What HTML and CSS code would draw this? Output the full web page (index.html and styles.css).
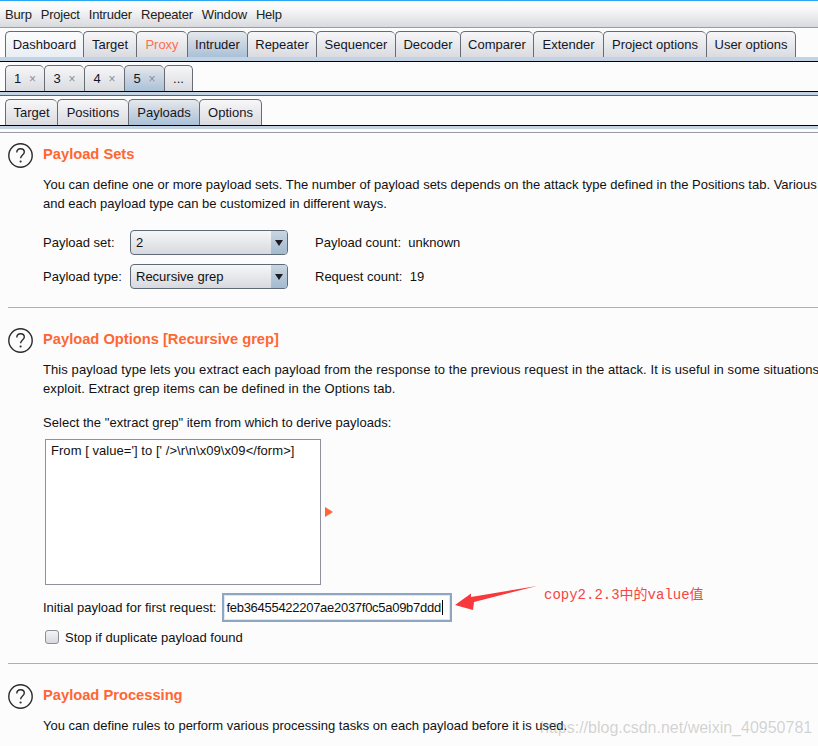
FILE: index.html
```html
<!DOCTYPE html>
<html lang="en">
<head>
    <meta charset="UTF-8">
    <title>Burp Suite Intruder Payloads</title>
    <link rel="stylesheet" href="styles.css">
</head>
<body>
    <div class="menu-bar">
        <span>Burp</span><span>Project</span><span>Intruder</span><span>Repeater</span><span>Window</span><span>Help</span>
    </div>

    <div class="tab-row main-tabs">
        <div class="tab tab-hover">Dashboard</div>
        <div class="tab">Target</div>
        <div class="tab tab-proxy">Proxy</div>
        <div class="tab tab-active">Intruder</div>
        <div class="tab">Repeater</div>
        <div class="tab">Sequencer</div>
        <div class="tab">Decoder</div>
        <div class="tab">Comparer</div>
        <div class="tab">Extender</div>
        <div class="tab">Project options</div>
        <div class="tab">User options</div>
    </div>
    <div class="band band-first"></div>

    <div class="tab-row attack-tabs">
        <div class="tab">1<i class="close">&times;</i></div>
        <div class="tab">3<i class="close">&times;</i></div>
        <div class="tab">4<i class="close">&times;</i></div>
        <div class="tab tab-active">5<i class="close">&times;</i></div>
        <div class="tab">...</div>
    </div>
    <div class="band band-second"></div>

    <div class="tab-row sub-tabs">
        <div class="tab">Target</div>
        <div class="tab">Positions</div>
        <div class="tab tab-active">Payloads</div>
        <div class="tab">Options</div>
    </div>
    <div class="band band-third"></div>
    <div class="top-rule"></div>

    <div class="section section-first">
        <div class="section-head">
            <svg class="help-icon" viewBox="0 0 25 25"><circle cx="12.5" cy="12.5" r="11.7"/><path d="M8.8 9.6c0-2.4 1.6-3.8 3.8-3.8s3.7 1.3 3.7 3.2c0 2.900-3.700 3.100-3.700 6.300"/><circle class="dot" cx="12.600" cy="18.500" r="1.100"/></svg>
            <h2>Payload Sets</h2>
        </div>
        <p class="desc">You can define one or more payload sets. The number of payload sets depends on the attack type defined in the Positions tab. Various<br>and each payload type can be customized in different ways.</p>
        <div class="combo-row">
            <label class="combo-label">Payload set:</label>
            <div class="combo"><span>2</span><b class="combo-arrow"></b></div>
            <span class="count">Payload count:&nbsp; unknown</span>
        </div>
        <div class="combo-row combo-row-next">
            <label class="combo-label">Payload type:</label>
            <div class="combo"><span>Recursive grep</span><b class="combo-arrow"></b></div>
            <span class="count">Request count:&nbsp; 19</span>
        </div>
    </div>

    <div class="rule rule-one"></div>

    <div class="section">
        <div class="section-head">
            <svg class="help-icon" viewBox="0 0 25 25"><circle cx="12.5" cy="12.5" r="11.7"/><path d="M8.8 9.6c0-2.4 1.6-3.8 3.8-3.8s3.7 1.3 3.7 3.2c0 2.900-3.700 3.100-3.700 6.300"/><circle class="dot" cx="12.600" cy="18.500" r="1.100"/></svg>
            <h2>Payload Options [Recursive grep]</h2>
        </div>
        <p class="desc desc-wide">This payload type lets you extract each payload from the response to the previous request in the attack. It is useful in some situations<br>exploit. Extract grep items can be defined in the Options tab.</p>
        <p class="select-note">Select the "extract grep" item from which to derive payloads:</p>
        <div class="grep-area">
            <div class="grep-list">From [ value='] to [' /&gt;\r\n\x09\x09&lt;/form&gt;]</div>
            <b class="expand-arrow"></b>
        </div>
        <div class="initial-row">
            <label>Initial payload for first request:</label>
            <div class="text-input">feb36455422207ae2037f0c5a09b7ddd<i class="caret"></i></div>
        </div>
        <div class="check-row">
            <i class="checkbox"></i>
            <span>Stop if duplicate payload found</span>
        </div>
    </div>

    <div class="rule rule-two"></div>

    <div class="section">
        <div class="section-head">
            <svg class="help-icon" viewBox="0 0 25 25"><circle cx="12.5" cy="12.5" r="11.7"/><path d="M8.8 9.6c0-2.4 1.6-3.8 3.8-3.8s3.7 1.3 3.7 3.2c0 2.900-3.700 3.100-3.700 6.300"/><circle class="dot" cx="12.600" cy="18.500" r="1.100"/></svg>
            <h2>Payload Processing</h2>
        </div>
        <p class="desc">You can define rules to perform various processing tasks on each payload before it is used.</p>
    </div>

    <svg class="note-arrow" viewBox="0 0 90 26"><polygon points="0,20 16,8.500 16,12 82,1 19,17 18,25"/></svg>
    <div class="note-text">copy2.2.3中的value值</div>
    <div class="watermark">https://blog.csdn.net/weixin_40950781</div>
</body>
</html>
```

FILE: styles.css
```css
html, body {
    margin: 0;
    height: 746px;
    overflow: hidden;
}
body {
    position: relative;
    background-color: #fcfcfc;
    color: #111;
    font-family: "Liberation Sans", Arial, sans-serif;
    font-size: 13px;
}
.menu-bar {
    display: flex;
    gap: 9px;
    height: 26px;
    align-items: center;
    padding-left: 5px;
    border-top: 1px solid #2aa7f2;
    border-bottom: 1px solid #9b9ba0;
    background: linear-gradient(#ffffff, #f8f8f9 30%, #d9dade);
    color: #222;
    letter-spacing: -0.2px;
}
.tab-row {
    display: grid;
    height: 26px;
    padding: 3px 0 0 5px;
}
.main-tabs {
    grid-template-columns: 78px 53px 51px 60px 69px 79px 65px 73px 70px 103px 90px;
}
.attack-tabs {
    grid-template-columns: 39px 40px 40px 40px 29px;
}
.sub-tabs {
    grid-template-columns: 52px 71px 71px 63px;
}
.tab {
    display: flex;
    align-items: center;
    justify-content: center;
    border: 1px solid #666b74;
    border-bottom: 0;
    border-right-width: 0;
    border-radius: 5px 5px 0 0;
    background: linear-gradient(#f7f7f9, #dadbe0);
    color: #15151f;
}
.tab:last-child {
    border-right-width: 1px;
}
.tab-hover {
    background: linear-gradient(#fbfcfd, #e9eef4);
}
.tab-proxy {
    color: #ff6e50;
}
.tab-active {
    background: linear-gradient(#e6e9ee, #d0d9e3 35%, #a9c1d7);
}
.close {
    margin-left: 8px;
    font-style: normal;
    font-size: 12px;
    color: #8d8d92;
}
.band {
    background-color: #c3d3e3;
}
.band-first {
    height: 4px;
    border-bottom: 1px solid #000;
}
.band-second {
    height: 3px;
    border-top: 1px solid #000;
    border-bottom: 1px solid #5c6068;
}
.band-third {
    height: 3px;
    border-top: 1px solid #000;
}
.top-rule {
    height: 1px;
    margin-top: 3px;
    background-color: #9a9aa6;
}
.section {
    padding: 20px 0 0 8px;
}
.section-first {
    padding-top: 10px;
}
.section-head {
    display: flex;
    align-items: center;
    height: 25px;
    gap: 10px;
}
.help-icon {
    width: 25px;
    height: 25px;
    fill: none;
    stroke: #2a2a2a;
    stroke-width: 1.400;
}
.help-icon .dot {
    fill: #2a2a2a;
    stroke: none;
}
h2 {
    margin: 0 0 4px;
    font-size: 14.7px;
    color: #ff6633;
}
.desc {
    margin: 7px 0 0 35px;
    line-height: 19px;
    white-space: nowrap;
}
.desc-wide {
    letter-spacing: 0.08px;
}
.combo-row {
    display: flex;
    align-items: center;
    height: 25px;
    margin: 17px 0 0 35px;
}
.combo-row-next {
    margin-top: 9px;
}
.combo-label {
    width: 87px;
}
.combo {
    display: flex;
    align-items: center;
    box-sizing: border-box;
    width: 158px;
    height: 25px;
    margin-right: 27px;
    padding-left: 5px;
    border: 1px solid #5f6a78;
    border-radius: 4px;
    background: linear-gradient(#f6f7f8, #d7d9df);
    overflow: hidden;
}
.combo span {
    flex: 1;
}
.combo-arrow {
    position: relative;
    width: 16px;
    height: 100%;
    background: linear-gradient(#c9d5e1, #a3bacf);
}
.combo-arrow::after {
    content: "";
    position: absolute;
    left: 4px;
    top: 9px;
    border: 4px solid transparent;
    border-top: 6px solid #1c1c22;
    border-bottom: 0;
}
.rule {
    height: 1px;
    margin-left: 8px;
    background-color: #aeaeb6;
}
.rule-one {
    margin-top: 18px;
}
.rule-two {
    margin-top: 17px;
}
.select-note {
    margin: 15px 0 0 35px;
    line-height: 19px;
    letter-spacing: 0.03px;
}
.grep-area {
    display: flex;
    align-items: center;
    gap: 4px;
    margin: 7px 0 0 37px;
}
.grep-list {
    box-sizing: border-box;
    width: 276px;
    height: 146px;
    padding: 3px 5px;
    border: 1px solid #8f929c;
    background-color: #fff;
    letter-spacing: 0.05px;
}
.expand-arrow {
    border: 5px solid transparent;
    border-left: 8px solid #ff6633;
    border-right: 0;
}
.initial-row {
    display: flex;
    align-items: center;
    gap: 6px;
    height: 29px;
    margin: 8px 0 0 35px;
}
.text-input {
    display: flex;
    align-items: center;
    box-sizing: border-box;
    width: 230px;
    height: 29px;
    padding-left: 2px;
    border: 2px solid #8ea6bf;
    box-shadow: inset 0 0 0 1px #dfe8f1;
    background-color: #fff;
    letter-spacing: -0.28px;
}
.caret {
    width: 1px;
    height: 15px;
    margin-left: 1px;
    background-color: #000;
}
.check-row {
    display: flex;
    align-items: center;
    gap: 6px;
    height: 18px;
    margin: 6px 0 0 37px;
}
.checkbox {
    box-sizing: border-box;
    width: 14px;
    height: 14px;
    border: 1px solid #8a8f98;
    border-radius: 3px;
    background: linear-gradient(#f4f4f6, #d8d9df);
}
.note-arrow {
    position: absolute;
    left: 455px;
    top: 585px;
    width: 90px;
    height: 26px;
    fill: #f8383c;
}
.note-text {
    position: absolute;
    left: 544px;
    top: 586px;
    font-family: "Liberation Mono", "Noto Sans CJK SC", monospace;
    font-size: 14px;
    line-height: 18px;
    color: #f54545;
}
.watermark {
    position: absolute;
    left: 540px;
    top: 718px;
    font-size: 16px;
    line-height: 20px;
    color: rgba(130, 130, 130, 0.35);
    white-space: nowrap;
}
```
